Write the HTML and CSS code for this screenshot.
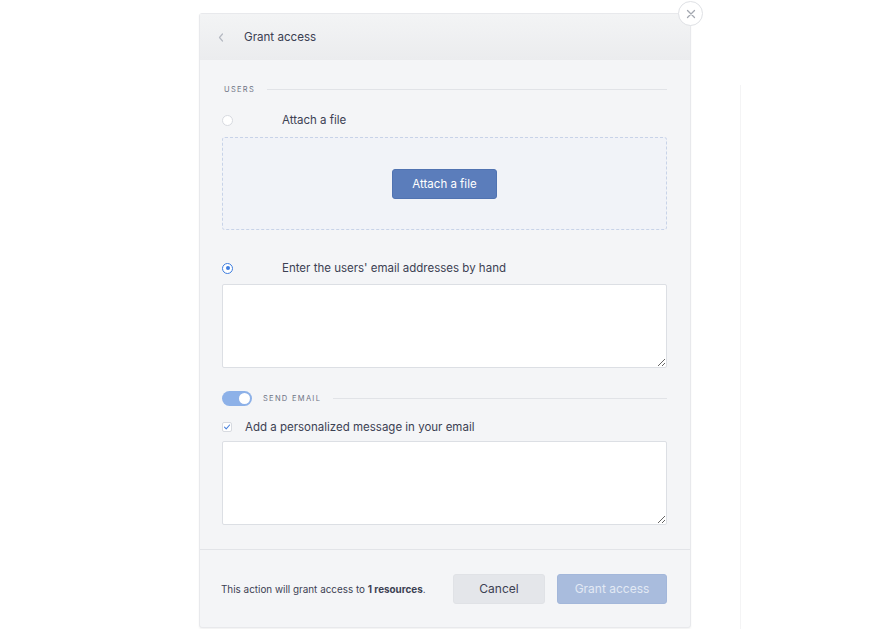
FILE: index.html
```html
<!DOCTYPE html>
<html lang="en">
<head>
    <meta charset="UTF-8">
    <meta name="viewport" content="width=device-width, initial-scale=1.0">
    <title>Grant access</title>
    <link rel="stylesheet" href="styles.css">
</head>
<body>
    <div class="modal">
        <button class="close-btn" aria-label="Close">
            <svg width="10" height="10" viewBox="0 0 10 10"><path d="M1.5 1.5l7 7M8.5 1.5l-7 7" stroke="#a3a7b0" stroke-width="1.3" stroke-linecap="round"/></svg>
        </button>

        <header class="modal-header">
            <svg class="back" width="6" height="9" viewBox="0 0 6 9"><path d="M4.5 1L1.5 4.5l3 3.5" fill="none" stroke="#b5b9c1" stroke-width="1.2" stroke-linecap="round" stroke-linejoin="round"/></svg>
            <h1 class="modal-title">Grant access</h1>
        </header>

        <div class="modal-body">
            <div class="section-label">
                <span>USERS</span>
                <div class="rule"></div>
            </div>

            <div class="option-row first">
                <span class="radio"></span>
                <span class="option-text">Attach a file</span>
            </div>

            <div class="dropzone">
                <button class="btn-primary">Attach a file</button>
            </div>

            <div class="option-row second">
                <span class="radio checked"></span>
                <span class="option-text">Enter the users' email addresses by hand</span>
            </div>

            <textarea class="field emails"></textarea>

            <div class="section-label toggle-row">
                <span class="toggle"><span class="knob"></span></span>
                <span class="toggle-label">SEND EMAIL</span>
                <div class="rule"></div>
            </div>

            <div class="check-row">
                <span class="checkbox">
                    <svg width="8" height="8" viewBox="0 0 8 8"><path d="M1.5 4.2l1.7 1.6L6.6 2" fill="none" stroke="#4a82dd" stroke-width="1.1" stroke-linecap="round" stroke-linejoin="round"/></svg>
                </span>
                <span class="check-text">Add a personalized message in your email</span>
            </div>

            <textarea class="field message"></textarea>
        </div>

        <footer class="modal-footer">
            <p class="summary">This action will grant access to <b>1 resources</b>.</p>
            <div class="actions">
                <button class="btn-cancel">Cancel</button>
                <button class="btn-grant">Grant access</button>
            </div>
        </footer>
    </div>
</body>
</html>
```

FILE: styles.css
```css
* {
    margin: 0;
    padding: 0;
    box-sizing: border-box;
    font-family: Inter, "Liberation Sans", sans-serif;
}

body {
    background: #ffffff linear-gradient(#f4f4f5, #f4f4f5) 740px 85px / 1px 100% no-repeat;
    padding-top: 13px;
    min-height: 100vh;
}

.modal {
    position: relative;
    width: 492px;
    margin-left: 199px;
    background-color: #f4f5f7;
    border: 1px solid #e8e9ec;
    border-radius: 3px;
    box-shadow: 0 1px 2px rgba(0, 0, 0, 0.06);
}

.close-btn {
    position: absolute;
    top: -13px;
    right: -13px;
    width: 25px;
    height: 25px;
    border-radius: 50%;
    background-color: #ffffff;
    border: 1px solid #dfe1e5;
    display: flex;
    align-items: center;
    justify-content: center;
    cursor: pointer;
}

.modal-header {
    height: 46px;
    display: flex;
    align-items: center;
    padding-left: 18px;
    background: linear-gradient(#f3f4f5, #ebecee);
}

.back {
    margin-right: 20px;
}

.modal-title {
    font-size: 11.6px;
    font-weight: 400;
    color: #3b4052;
}

.modal-body {
    padding: 24px 23px 24px 22px;
}

.section-label {
    display: flex;
    align-items: center;
    height: 10px;
    padding-left: 2px;
    font-size: 7.5px;
    letter-spacing: 1.3px;
    color: #6d7283;
}

.rule {
    flex: 1;
    height: 1px;
    background-color: #e1e3e7;
    margin-left: 12px;
}

.option-row {
    display: flex;
    align-items: center;
    height: 12px;
}

.option-row.first {
    margin-top: 20px;
}

.option-row.second {
    margin-top: 32px;
}

.radio {
    width: 11px;
    height: 11px;
    border-radius: 50%;
    background-color: #ffffff;
    border: 1px solid #d7dae0;
    display: flex;
    align-items: center;
    justify-content: center;
}

.radio.checked {
    border-color: #3d7ddf;
}

.radio.checked::before {
    content: "";
    width: 4px;
    height: 4px;
    border-radius: 50%;
    background-color: #3d7ddf;
}

.option-text {
    margin-left: 49px;
    font-size: 11.5px;
    color: #3c4153;
}

.dropzone {
    margin-top: 11px;
    height: 93px;
    border: 1px dashed #c8d3e8;
    border-radius: 3px;
    background-color: #f1f3f8;
    display: flex;
    align-items: center;
    justify-content: center;
}

.btn-primary {
    width: 105px;
    height: 30px;
    border: 1px solid #5073b1;
    border-radius: 3px;
    background-color: #5b7dbb;
    color: #ffffff;
    font-size: 11.5px;
    cursor: pointer;
}

.field {
    display: block;
    width: 100%;
    height: 84px;
    background-color: #ffffff;
    border: 1px solid #dcdfe4;
    border-radius: 2px;
    resize: vertical;
    outline: none;
}

.emails {
    margin-top: 10px;
}

.toggle-row {
    margin-top: 23px;
    height: 15px;
    padding-left: 0;
}

.toggle {
    width: 30px;
    height: 15px;
    border-radius: 8px;
    background-color: #8db1e8;
    display: flex;
    align-items: center;
    justify-content: flex-end;
    padding-right: 2px;
}

.knob {
    width: 11px;
    height: 11px;
    border-radius: 50%;
    background-color: #ffffff;
}

.toggle-label {
    margin-left: 11px;
}

.check-row {
    margin-top: 15px;
    height: 12px;
    display: flex;
    align-items: center;
}

.checkbox {
    width: 10px;
    height: 10px;
    border: 1px solid #d7dae0;
    border-radius: 2px;
    background-color: #ffffff;
    display: flex;
    align-items: center;
    justify-content: center;
}

.check-text {
    margin-left: 13px;
    font-size: 11.5px;
    color: #3c4153;
}

.message {
    margin-top: 8px;
}

.modal-footer {
    height: 78px;
    border-top: 1px solid #e2e4e8;
    display: flex;
    align-items: center;
    justify-content: space-between;
    padding: 0 23px 0 21px;
}

.summary {
    font-size: 9.9px;
    color: #3c4153;
}

.summary b {
    font-weight: 700;
}

.actions {
    display: flex;
    gap: 12px;
}

.btn-cancel,
.btn-grant {
    height: 30px;
    border-radius: 3px;
    font-size: 12px;
    cursor: pointer;
}

.btn-cancel {
    width: 92px;
    border: 1px solid #e0e2e6;
    background-color: #e4e6ea;
    color: #3c4153;
}

.btn-grant {
    width: 110px;
    border: 1px solid #a3b7da;
    background-color: #a9bcdd;
    color: #e2e9f4;
}
```
